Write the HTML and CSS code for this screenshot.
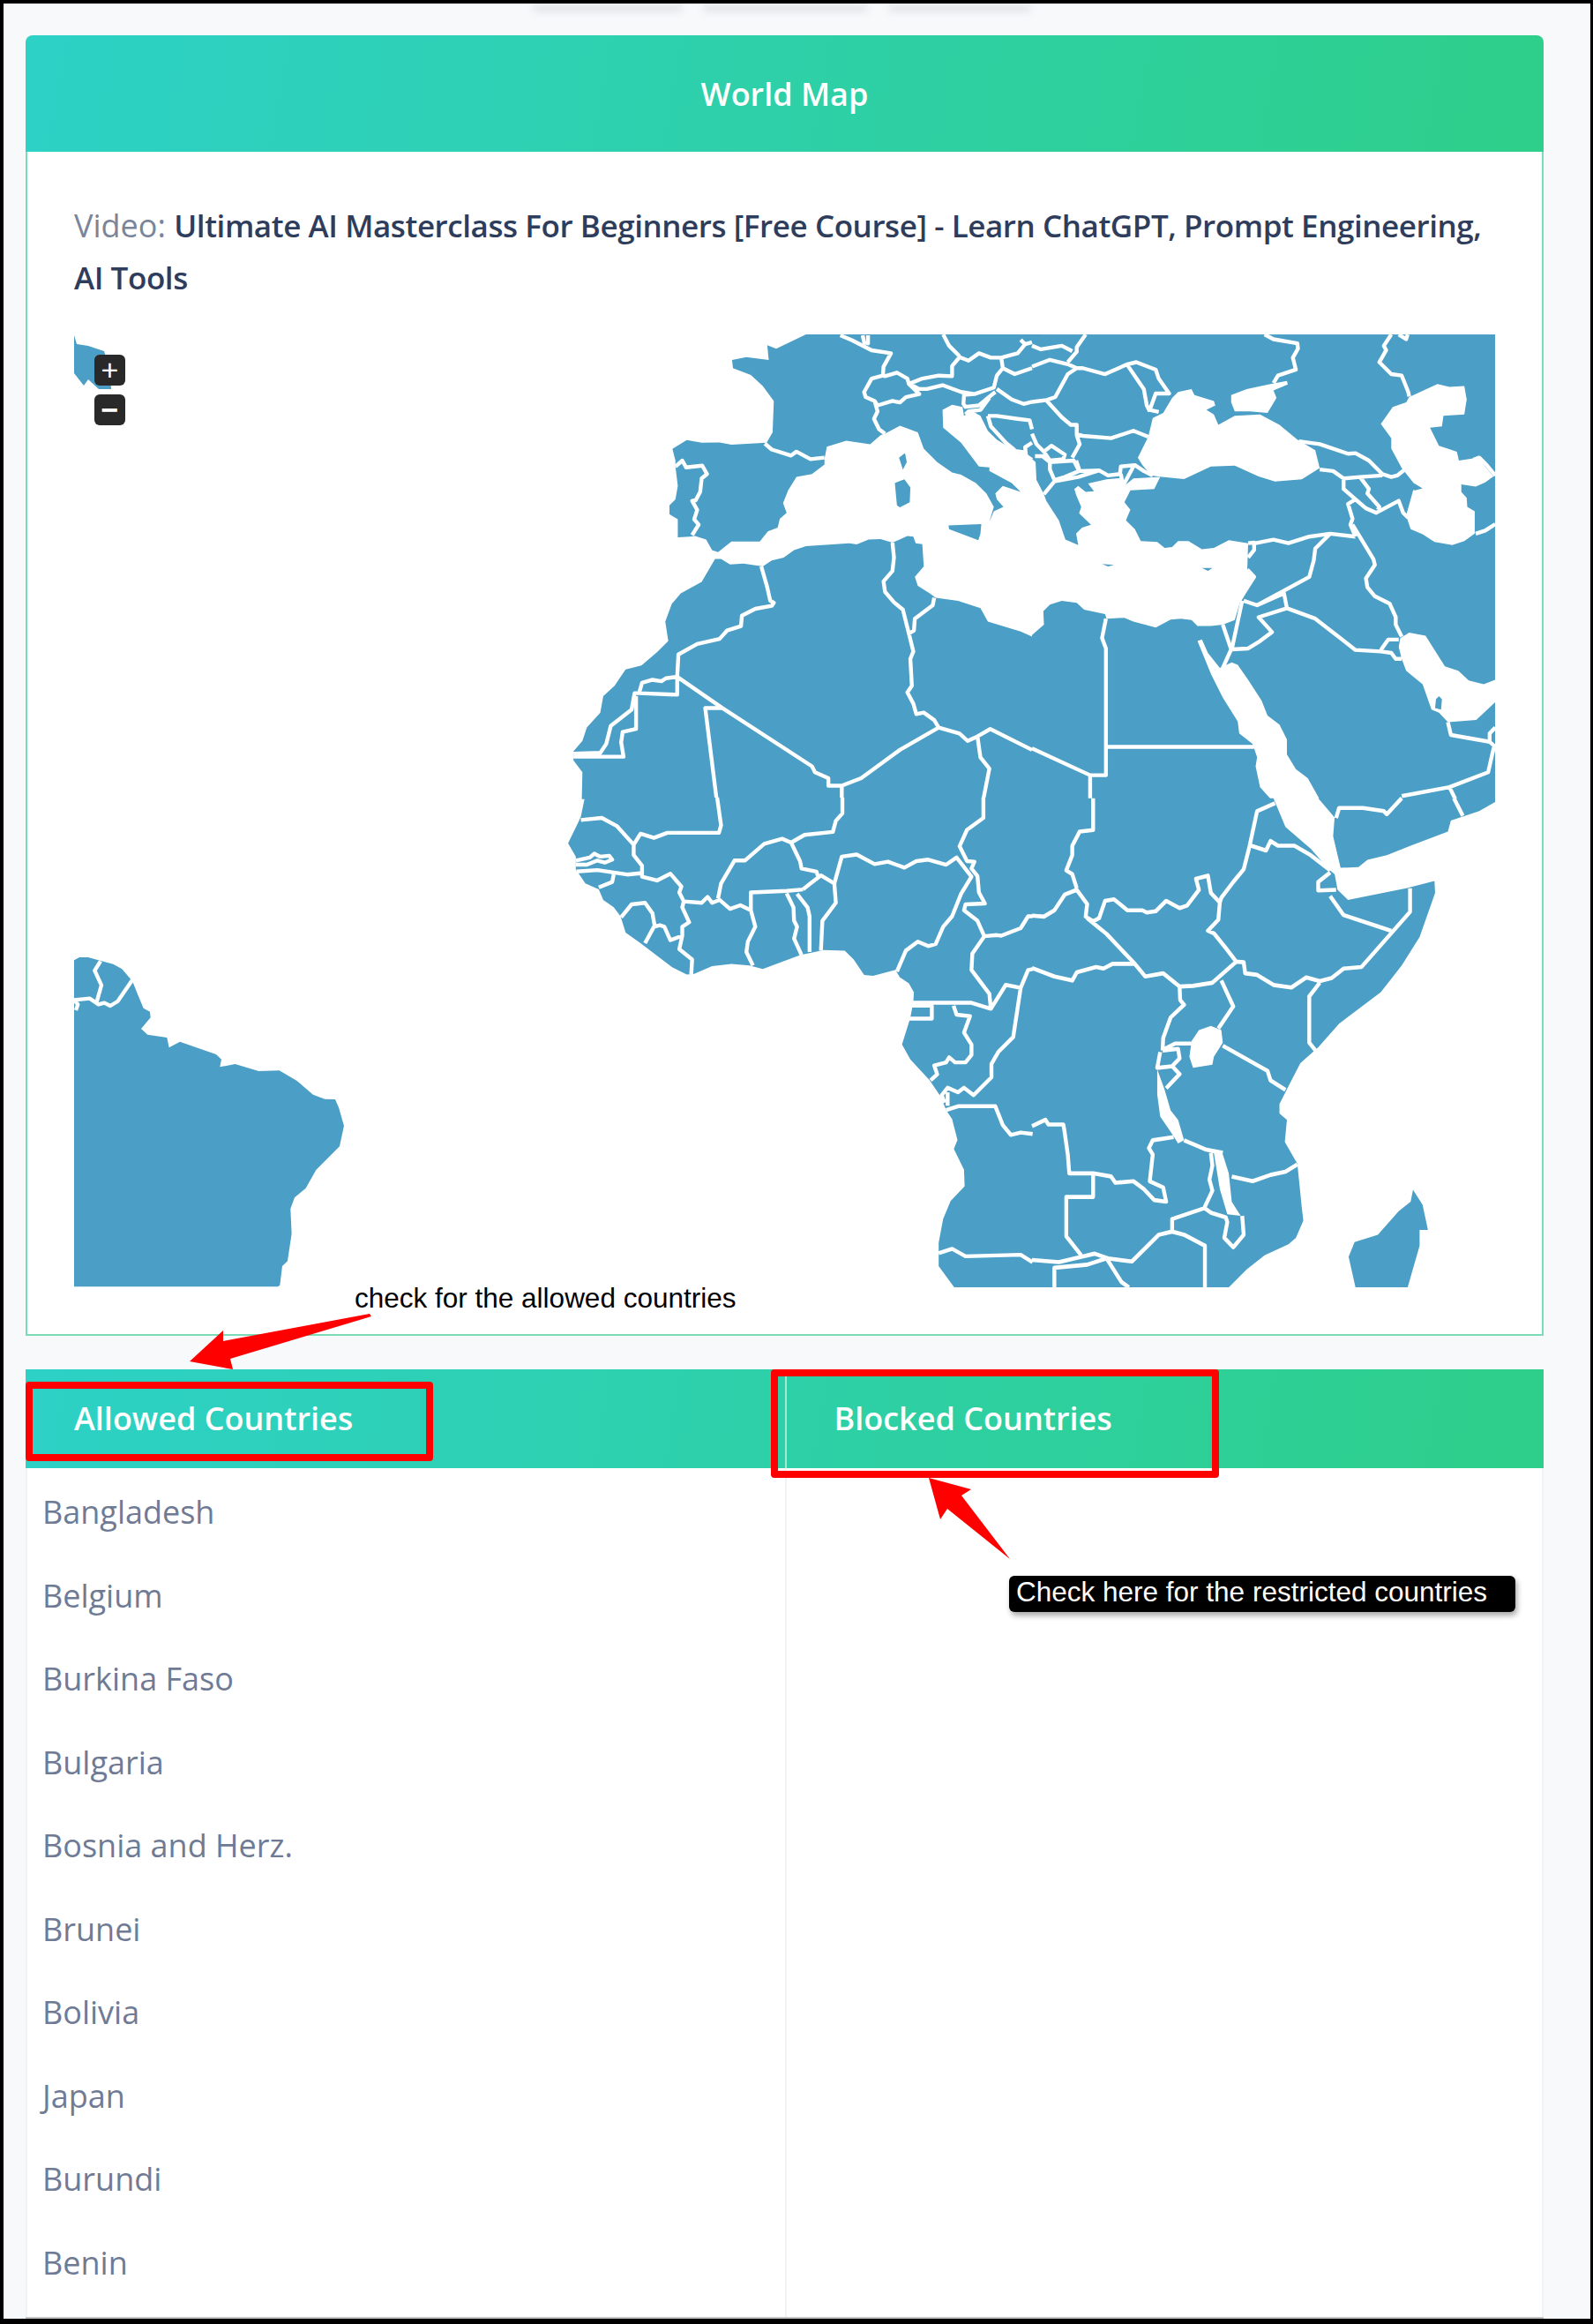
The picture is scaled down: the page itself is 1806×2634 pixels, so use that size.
FILE: index.html
```html
<!DOCTYPE html>
<html lang="en">
<head>
  <meta charset="UTF-8">
  <title>World Map</title>
  <link rel="stylesheet" href="styles.css">
</head>
<body>
  <div class="frame">
    <div class="top-tabs">
      <span class="top-tab tab-a"></span>
      <span class="top-tab tab-b"></span>
      <span class="top-tab tab-c"></span>
    </div>

    <section class="map-card">
      <h2 class="card-head">World Map</h2>
      <div class="card-body">
        <p class="video-line">Video: <strong>Ultimate AI Masterclass For Beginners [Free Course] - Learn ChatGPT, Prompt Engineering, AI Tools</strong></p>
        <div class="map-box">
          <svg class="map" viewBox="84 379 1611 1080" width="1611" height="1080">
            <!-- top left corner and south america -->
            <polygon class="land" points="84,380 87,390 100,392 118,398 125,420 126,441 112,441 100,430 95,437 84,423"/>
            <g transform="translate(70 1070) scale(.3333)">
              <polygon class="land" points="42,55 60,45 90,45 125,55 175,68 205,85 228,112 240,125 258,170 278,218 300,230 302,250 270,288 292,308 358,318 365,352 402,332 525,375 543,392 538,418 590,408 670,432 740,430 800,465 855,512 895,527 930,528 942,555 960,618 945,688 865,768 830,830 792,862 778,900 782,985 768,1078 750,1095 742,1160 735,1165 42,1165"/>
              <path class="line" d="M132 58 112 90 135 140 118 200M42 190 95 185 125 205 145 200 165 210 190 195 240 122M42 190 55 205 48 225"/>
            </g>

            <!-- europe, north africa -->
            <g transform="translate(640 375) scale(.338)">
              <polygon class="land" points="810,12 710,60 680,48 685,98 610,88 562,98 565,125 625,148 665,185 702,235 698,340 678,375 560,382 520,374 460,375 410,366 362,396 372,435 372,455 380,520 372,565 352,585 352,615 380,632 380,692 420,690 438,688 475,700 495,735 515,742 560,706 655,706 682,672 715,660 722,630 745,610 733,578 750,535 778,490 830,480 872,448 872,430 880,388 945,368 1025,380 1060,350 1075,345 1125,318 1185,340 1205,395 1250,440 1300,475 1330,482 1380,510 1415,545 1440,590 1425,640 1440,605 1472,590 1450,565 1445,545 1470,520 1530,540 1500,510 1425,470 1425,458 1390,455 1330,375 1270,325 1268,265 1300,248 1335,255 1340,285 1365,268 1395,285 1420,335 1450,365 1500,395 1540,400 1568,430 1600,440 1600,12"/>
              <polygon class="land" points="505,765 460,842 390,880 360,915 338,975 348,1040 310,1078 258,1122 205,1135 168,1190 130,1225 120,1280 75,1330 60,1375 30,1410 30,1440 60,1480 58,1570 1600,1570 1600,1030 1568,1025 1530,1008 1420,975 1395,930 1320,905 1245,895 1225,880 1185,855 1175,825 1205,790 1200,715 1178,712 1170,690 1150,688 1100,710 1060,698 1020,700 980,716 955,712 810,722 770,735 735,760 695,770 665,790 600,780 555,783 525,765"/>
              <polygon class="land" points="1142,410 1122,425 1135,465 1148,440"/>
              <polygon class="land" points="1140,498 1108,510 1115,585 1125,592 1158,575 1160,525"/>
              <polygon class="land" points="1288,652 1398,648 1395,680 1388,702 1290,665"/>
            </g>

            <!-- east europe, middle east: land first, then the seas on top -->
            <g transform="translate(1170 375) scale(.338)">
              <rect class="land" x="0" y="12" width="1554" height="1558"/>
              <polygon class="sea" points="405,292 440,275 470,225 490,205 535,195 545,215 610,235 615,250 585,265 610,280 625,315 680,285 765,280 830,315 890,365 950,400 965,460 905,498 815,505 760,488 680,452 600,455 510,497 435,490 400,485 370,450 355,425 390,355"/>
              <polygon class="sea" points="668,215 720,195 800,178 855,168 858,180 810,200 820,225 790,275 730,270 680,270 668,240"/>
              <polygon class="sea" points="-5,425 12,440 15,500 40,548 48,570 90,635 112,700 155,718 148,680 168,660 198,650 158,612 165,590 148,550 142,530 155,520 180,540 208,538 188,512 250,498 300,493 303,525 340,495 430,490 410,530 330,535 310,575 330,600 315,635 345,665 365,705 420,708 445,728 470,725 490,705 525,705 570,732 610,728 660,702 725,712 722,800 745,825 720,860 705,885 680,970 640,985 600,990 555,990 535,970 500,965 465,968 415,995 340,975 310,962 250,965 245,950 175,935 150,912 100,905 60,918 38,940 40,985 0,1020 -5,1022"/>
              <polygon class="sea" points="1265,222 1360,178 1400,188 1450,185 1458,230 1450,280 1380,285 1375,320 1335,325 1365,385 1425,405 1432,435 1495,425 1520,455 1548,488 1520,508 1488,522 1440,515 1440,540 1458,560 1460,590 1485,605 1485,680 1450,705 1410,718 1350,708 1310,682 1270,665 1255,620 1285,535 1310,528 1280,510 1240,460 1205,395 1205,360 1170,312 1210,255 1255,240"/>
              <polygon class="sea" points="555,1040 570,1035 590,1080 630,1130 670,1112 690,1120 725,1170 770,1240 790,1290 830,1320 855,1370 855,1420 885,1470 925,1500 967,1575 805,1575 765,1530 750,1460 755,1430 740,1385 695,1350 690,1310 640,1230 600,1150"/>
              <polygon class="sea" points="1235,1030 1265,1012 1320,1022 1385,1125 1430,1140 1465,1172 1515,1185 1554,1170 1554,1245 1490,1305 1395,1312 1365,1280 1340,1270 1310,1185 1255,1140 1240,1100 1230,1060"/>
              <polygon class="land" points="1365,1225 1375,1235 1372,1270 1352,1265 1355,1235"/>
              <polygon class="land" points="570,795 605,795 590,805"/>
              <polygon class="land" points="235,782 275,785 255,790"/>
            </g>

            <g transform="translate(640 375) scale(.338)">
              <path class="line" d="M372 455 395 435 408 458 462 452 478 480 460 495 455 540 440 568 428 570 445 600 435 632 450 650 428 685M672 378 695 398 760 418 778 405 825 430 872 425M925 15 965 32 1030 65 1095 75 1070 120 1068 150 1030 160 1005 205 1010 222 1040 235 1050 270 1038 295 1055 330 1075 345M1000 15 1005 38 1018 42 1018 15M1040 235 1050 250 1100 235 1125 240 1145 222 1190 212 1155 178 1150 160 1115 140 1075 152 1068 150M1155 178 1200 160 1255 150 1300 152 1300 118 1325 88 1355 100 1390 75 1430 90 1465 90 1470 125 1450 150 1440 190 1375 212 1330 205 1268 182 1215 195 1190 195 1160 180M1270 12 1290 50 1325 85M1465 90 1520 75 1545 45 1568 38M1530 30 1545 45M1470 125 1510 145 1568 125M1450 195 1500 230 1540 245 1568 238M1375 212 1340 215 1338 245 1345 255 1390 250 1420 225 1445 205M1345 280 1355 270 1395 265 1425 225M1420 285 1450 285 1520 295 1560 300 1568 330M1420 285 1430 320 1480 375 1510 400M1568 375 1545 390 1548 420 1568 432"/>
              <path class="line" d="M660 790 680 860 690 905 702 912 695 922 640 932 595 955 592 990 545 1005 520 1033 445 1050 382 1085 378 1160 340 1165 325 1175 295 1170 260 1180 250 1215 378 1220 378 1160 530 1265 830 1460 840 1480 885 1500 885 1525 930 1525 995 1500 1125 1405 1255 1330 1240 1305 1205 1280 1180 1285 1170 1250 1150 1212 1165 1190 1160 1100 1170 1075 1155 1015 1135 935 1105 910 1075 875 1070 840 1100 805 1105 760 1100 710M250 1215 235 1215 225 1270 155 1325 140 1385 120 1415 30 1418M240 1225 240 1335 195 1345 190 1380 198 1428 30 1428M530 1265 472 1265 510 1570M1240 895 1235 920 1175 965 1172 1005 1155 1015M1255 1330 1325 1350 1352 1375 1385 1360 1428 1335 1568 1405M1385 1360 1395 1430 1425 1468 1405 1570M930 1525 930 1570"/>
            </g>
            <g transform="translate(1170 375) scale(.338)">
              <path class="line" d="M780 12 810 28 890 42 892 60 875 90 885 130 825 150 810 175M1205 12 1180 50 1188 65 1165 105 1205 145 1240 150 1262 205 1265 220M1230 12 1255 28 1260 12M180 12 150 55 150 70 120 105M150 125 170 125 245 145 320 112 350 105 415 130 425 160 460 210 415 210 395 265 425 272M320 115 375 195 385 250 395 270M0 120 60 97 120 112 150 125 120 145 78 222 50 232 0 238M0 50 30 62 100 50 135 68M50 235 100 290 130 315 150 315 150 350 160 380 135 425M145 345 170 352 265 360 340 335 390 355M160 470 225 468 255 485 295 480 298 455 345 450 375 470 405 485M148 435 160 470M60 440 140 435 158 470 110 490 75 500 60 465 60 440M40 405 65 385 110 415 105 430 60 435 40 405M10 420 35 420 60 440M75 505 40 548M75 505 155 490 225 468M298 480 305 520 340 455M0 345 15 380 40 405"/>
              <path class="line" d="M895 370 965 380 1060 412 1085 410 1130 435 1175 480M965 465 1010 470 1045 495 1100 490 1175 485M1100 490 1130 530 1125 545 1165 590 1160 600M1175 480 1205 490 1225 485 1250 465M1045 495 1045 530 1085 565 1060 580 1075 630 1068 650 1085 690M1085 565 1120 595 1155 610 1230 570 1245 610 1260 625 1285 535M1075 650 1145 765 1150 785 1120 830 1125 860 1150 890 1200 915 1220 960 1220 985 1240 1025M725 712 745 710 745 735 725 760M750 712 810 700 860 712 930 690 1000 680 1085 690M1000 680 950 730 945 770 930 825 755 920 710 905M722 800 745 825 710 880 695 905M755 920 845 880 855 930 760 960 805 1010 765 1040 725 1065 670 1068 705 905M855 930 950 965 1085 1070 1170 1075 1205 1080 1220 1100 1240 1100M1170 1070 1195 1035 1230 1035M640 985 668 1068 640 1130M248 965 235 1030 248 1065 248 1490 195 1490 0 1400M248 1395 745 1395M195 1490 195 1570M1395 1312 1405 1355 1535 1378 1550 1392 1530 1480 1400 1530 1240 1560M1400 1530 1420 1570M1535 1378 1535 1350 1554 1330M1488 680 1520 670 1554 648M1480 432 1500 425 1525 450 1554 485"/>
            </g>

            <!-- west and central africa -->
            <g transform="translate(640 905) scale(.338)">
              <polygon class="land" points="68,-3 55,60 50,72 12,150 38,195 38,240 50,255 70,285 115,305 130,340 165,365 188,395 205,450 255,485 360,565 410,590 435,588 495,562 560,555 620,560 665,572 790,525 870,508 940,510 970,540 1005,592 1035,595 1110,575 1125,600 1155,620 1172,650 1170,682 1160,735 1132,825 1160,875 1225,945 1262,1000 1280,1045 1300,1075 1318,1145 1306,1175 1340,1245 1342,1300 1295,1350 1270,1410 1255,1490 1255,1568 1307,1639 1600,1639 1600,-3"/>
            </g>
            <!-- east africa, arabia, madagascar -->
            <g transform="translate(1170 905) scale(.338 .357)">
              <polygon class="land" points="-3,-1 810,-1 850,90 935,160 995,225 1015,240 1025,290 1060,322 1255,285 1350,262 1352,300 1300,440 1240,530 1170,615 1030,715 960,790 900,840 865,905 830,970 830,1000 855,1020 848,1090 890,1160 905,1300 910,1340 885,1395 860,1415 780,1450 720,1495 660,1552 -3,1552"/>
              <polygon class="land" points="960,-1 1015,60 1010,120 1035,220 1095,218 1125,195 1190,180 1270,150 1395,105 1405,70 1500,40 1556,10 1556,-1"/>
              <polygon class="land" points="1278,1242 1310,1290 1328,1370 1300,1370 1300,1420 1260,1552 1085,1552 1062,1455 1082,1408 1160,1385 1230,1310 1270,1280"/>
              <polygon class="sea" points="535,770 560,735 600,722 635,735 640,775 610,820 605,845 540,855 528,820"/>
              <polygon class="sea" points="420,860 445,925 465,990 490,1020 510,1085 490,1095 470,1065 430,1010 420,940"/>
              <polygon class="sea" points="640,1130 660,1190 670,1280 700,1325 655,1320 630,1240 610,1125"/>
            </g>
            <g transform="translate(640 905) scale(.338)">
              <path class="line" d="M38 208 85 198 100 185 120 195 150 192 160 205 135 215 110 208 75 222 38 222M55 72 125 65 175 92 232 155 255 118 300 132 345 115 518 115 525 90 512 -3M232 155 232 190 260 225 260 262 310 275 355 252 392 295 385 315 400 345 460 350 480 330 495 350 520 340 555 370 590 358 625 375 640 430 615 480 610 515 632 560M40 245 110 240 210 255 260 250M165 255 160 280 115 298M400 345 395 365 418 415 395 430 395 460 355 475 335 430 320 425 300 430 270 485M190 398 225 355 270 350 295 385 302 425M395 460 385 505 428 540 425 590M625 375 625 315 745 310 800 305M745 318 768 365 770 410 780 430 770 470 795 525M780 320 815 365 822 395 822 515M860 510 865 410 910 350 905 285 860 258 825 285 800 305"/>
              <path class="line" d="M515 335 525 285 570 208 605 208 670 152 730 135 760 148 805 122 900 112 910 75 932 50 932 -3M760 148 790 210 795 235 845 245 850 260M905 285 930 195 980 188 1040 220 1085 212 1140 232 1180 210 1220 205 1280 222 1315 198 1365 262 1330 320 1300 395 1270 430 1245 488 1220 495 1185 480 1145 510 1115 580M1405 -3 1405 65 1350 105 1325 160 1350 210 1375 212 1365 235 1385 260 1390 315 1410 352 1345 355 1340 375 1385 410 1408 462 1450 458 1465 460 1530 435 1555 395 1570 395M1408 462 1368 520 1365 575 1425 655 1430 705 1365 685 1168 685M1165 695 1232 695 1232 738 1155 738M1305 695 1315 725 1360 730 1340 785 1365 825 1365 860 1345 885 1310 885 1290 868 1280 885 1240 895 1250 925 1228 945M1430 705 1480 625 1530 635 1505 800 1455 850 1432 890 1432 935 1372 995 1340 970 1320 985 1285 970 1265 995 1275 1020M1285 985 1285 1030M1280 1045 1320 1032 1445 1032 1470 1095 1497 1128 1530 1120 1570 1125M1530 635 1555 575 1570 572M1255 1525 1300 1510 1345 1535 1530 1530 1570 1555"/>
            </g>
            <g transform="translate(1170 905) scale(.338 .357)">
              <path class="line" d="M205 -1 205 100 160 105 135 150 135 180 115 228 135 240 150 285M0 372 40 375 75 355 110 305 150 290 185 335 180 375 205 390 225 380 245 325 275 320 320 355 370 355 385 362 415 358 450 325 495 348 520 340 560 290 550 255 590 245 600 300 630 330 625 385 590 420 610 428 650 475 685 518M630 330 635 315 675 265 710 225 730 150 755 40 815 15M735 150 785 165 800 135 825 150 880 150 935 180 1000 228M1000 235 960 265 960 292 1020 290M1000 310 1045 370 1205 420M1268 285 1268 360 1105 535 1045 540 1005 570 965 580 920 568 870 600 810 592 755 560 715 555 710 520 685 518M965 585 930 628 930 775 955 805M185 380 250 430 300 480 345 525 380 565 440 555 495 597M0 538 75 565 135 578 150 552 215 535 240 540 270 525 345 525M495 597 540 595 605 585 685 518M635 578 675 660 625 730"/>
              <path class="line" d="M495 597 497 640 510 655 465 695 440 760 438 800M445 795 480 778 535 778M438 800 490 795 495 825 470 850 420 855 430 805M425 855 470 850 495 875 450 920M640 785 790 865 800 895 850 925M670 1200 740 1215 800 1195 850 1185 890 1162M510 1085 585 1115 640 1125M475 1075 405 1085 392 1110 405 1130 395 1215 440 1235 450 1280 410 1275 375 1240 340 1215 280 1220 265 1200 205 1190 125 1190 120 1130 108 1050 105 1035 55 1035 45 1020 0 1040M600 1125 605 1165 595 1210 605 1245 578 1300 600 1315 650 1330 655 1345 645 1395 675 1425 710 1385 705 1325M205 1190 205 1265 115 1265 115 1390 165 1450M580 1300 470 1335 470 1375 510 1385 580 1420 580 1552M470 1375 425 1385 335 1470 255 1460 210 1445 165 1455 90 1472 0 1465M75 1552 75 1490 185 1480 250 1460 300 1535 325 1552M1020 62 1030 30 1110 30 1180 40 1190 50 1240 -1M1415 -1 1445 55"/>
            </g>
          </svg>
          <div class="zoom-btns">
            <button class="zoom-btn">+</button>
            <button class="zoom-btn minus">&minus;</button>
          </div>
        </div>
      </div>
    </section>

    <section class="country-panel">
      <div class="panel-head">
        <div class="panel-tab">Allowed Countries</div>
        <div class="panel-tab second">Blocked Countries</div>
      </div>
      <div class="panel-cols">
        <ul class="country-list">
          <li>Bangladesh</li>
          <li>Belgium</li>
          <li>Burkina Faso</li>
          <li>Bulgaria</li>
          <li>Bosnia and Herz.</li>
          <li>Brunei</li>
          <li>Bolivia</li>
          <li>Japan</li>
          <li>Burundi</li>
          <li>Benin</li>
        </ul>
        <ul class="country-list"></ul>
      </div>
    </section>
  </div>

  <!-- screenshot annotations -->
  <div class="mark mark-allowed"></div>
  <div class="mark mark-blocked"></div>
  <div class="note note-allowed">check for the allowed countries</div>
  <div class="note note-blocked">Check here for the restricted countries</div>
  <svg class="arrows" viewBox="0 0 1806 2634" width="1806" height="2634">
    <polygon points="419,1489 421,1492 261,1540 264,1552 215,1543 253,1508 253,1520"/>
    <polygon points="1053,1675 1101,1688 1090,1695 1145,1767 1074,1710 1066,1722"/>
  </svg>
</body>
</html>
```

FILE: styles.css
```css
* {
  box-sizing: border-box;
}

body {
  margin: 0;
  position: relative;
  font-family: "Open Sans", sans-serif;
}

.frame {
  height: 2634px;
  display: flex;
  flex-direction: column;
  background: #f8f9fb;
  border-style: solid;
  border-color: #000;
  border-width: 4px 3px 6px 4px;
  overflow: hidden;
}

.top-tabs {
  height: 36px;
  display: flex;
}

.top-tab {
  height: 3px;
  background: #eceef1;
  box-shadow: 0 4px 10px rgba(100, 105, 125, .4);
}

.tab-a { width: 168px; margin-left: 601px; }
.tab-b { width: 185px; margin-left: 25px; }
.tab-c { width: 160px; margin-left: 25px; }

.map-card {
  width: 1721px;
  margin-left: 25px;
}

.card-head {
  height: 132px;
  margin: 0;
  display: flex;
  align-items: center;
  justify-content: center;
  color: #fff;
  font-size: 36px;
  font-weight: 600;
  border-radius: 8px 8px 0 0;
  background: linear-gradient(100deg, #2dd1c6, #2ecf8a);
}

.card-body {
  height: 1342px;
  padding: 54px 53px 0;
  background: #fff;
  border: solid #79dcb6;
  border-width: 0 2px 2px;
}

.video-line {
  margin: 0 0 35px;
  font-size: 36px;
  line-height: 59px;
  color: #7a849a;
}

.video-line strong {
  font-size: 35px;
  font-weight: 600;
  letter-spacing: -.43px;
  color: #2f3d5c;
}

.map-box {
  position: relative;
  width: 1611px;
  height: 1080px;
}

.map {
  display: block;
}

.land { fill: #4b9ec5; }
.sea { fill: #fff; }

.line {
  fill: none;
  stroke: #fff;
  stroke-width: 13;
  stroke-linejoin: round;
}

.zoom-btns {
  position: absolute;
  left: 23px;
  top: 23px;
  display: flex;
  flex-direction: column;
  gap: 10px;
}

.zoom-btn {
  width: 35px;
  height: 35px;
  padding: 0;
  border: 0;
  border-radius: 6px;
  background: #292929;
  color: #fff;
  font: 400 34px/33px "Liberation Sans", sans-serif;
}

.zoom-btn.minus {
  font-weight: 700;
}

.country-panel {
  width: 1721px;
  margin: 38px 0 0 25px;
  flex: 1;
  display: flex;
  flex-direction: column;
}

.panel-head {
  height: 112px;
  display: grid;
  grid-template-columns: 1fr 1fr;
  background: linear-gradient(100deg, #2dd1c6, #2ecf8a);
}

.panel-tab {
  padding-left: 55px;
  line-height: 112px;
  color: #fff;
  font-size: 36px;
  font-weight: 600;
}

.panel-tab.second {
  padding-left: 54px;
  border-left: 2px solid rgba(255, 255, 255, .55);
}

.panel-cols {
  flex: 1;
  display: grid;
  grid-template-columns: 1fr 1fr;
  background: #fff;
  border-bottom: 2px solid #c4c4c4;
}

.country-list {
  margin: 0;
  padding: 3px 0 0 17px;
  list-style: none;
  border-left: 2px solid #f1f2f4;
  font-size: 36px;
  line-height: 94.5px;
  color: #6f7b94;
}

.country-list + .country-list {
  border-right: 2px solid #f1f2f4;
}

.mark {
  position: absolute;
  border: 8px solid #fe0000;
  border-radius: 4px;
}

.mark-allowed { left: 29px; top: 1566px; width: 462px; height: 90px; }
.mark-blocked { left: 874px; top: 1552px; width: 508px; height: 123px; }

.note {
  position: absolute;
  font-family: "Liberation Sans", sans-serif;
  font-size: 31.5px;
  white-space: nowrap;
}

.note-allowed {
  left: 402px;
  top: 1453px;
  color: #000;
}

.note-blocked {
  left: 1144px;
  top: 1786px;
  width: 574px;
  height: 41px;
  padding-left: 8px;
  line-height: 37px;
  color: #fff;
  background: #000;
  border-radius: 6px;
  box-shadow: 2px 4px 6px rgba(0, 0, 0, .35);
}

.arrows {
  position: absolute;
  left: 0;
  top: 0;
  fill: #fe0000;
  pointer-events: none;
}
```
